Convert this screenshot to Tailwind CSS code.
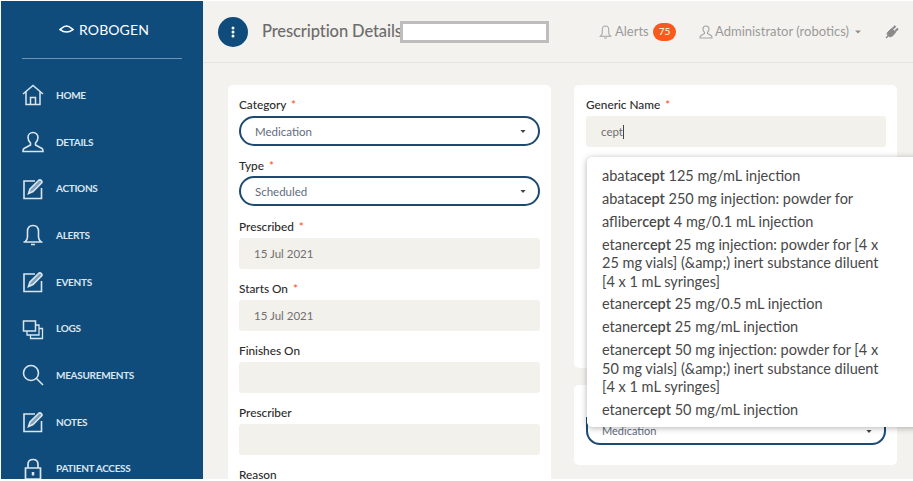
<!DOCTYPE html>
<html>
<head>
<meta charset="utf-8">
<title>Prescription Details</title>
<script src="https://cdn.jsdelivr.net/npm/@tailwindcss/browser@4"></script>
</head>
<body class="bg-white font-['Lato','Open_Sans',sans-serif]">
<div class="flex w-[913px] h-[481px] overflow-hidden pl-px pt-px">
    <div class="relative flex w-full h-[478px] overflow-hidden bg-[#f4f2ee]">

        <!-- Sidebar -->
        <aside class="w-[202px] shrink-0 bg-[#0f4c7c] px-[21px]">
            <div class="flex items-center justify-center gap-[5px] h-[58px] border-b border-[#6f97b5] text-white text-[14px] tracking-[0.1px] pb-[1px] pl-[4px]">
                <svg width="15" height="8" viewBox="0 0 15 8" fill="none" stroke="white" stroke-width="1.6"><path d="M1 4.600C3 3 4.500 1 7.500 1s4.500 2 6.500 3.600C12 6 10 7 7.500 7S3 6 1 4.600Z"/></svg>
                <span>ROBOGEN</span>
            </div>
            <nav class="mt-[13px] text-[#dbe5ee] text-[10px] font-bold tracking-[-0.3px]">
                <!-- Home -->
                <a class="flex items-center h-[46.700px]">
                    <svg class="w-[22px] mr-[12px] shrink-0" width="22" height="22" viewBox="0 0 22 22" fill="none" stroke="#dbe5ee" stroke-width="1.500"><path d="M1 10 11 1.500 21 10M4 8v12.500h14V8M8.500 20.500v-7h5v7"/></svg>
                    <span>HOME</span>
                </a>
                <!-- Details -->
                <a class="flex items-center h-[46.700px]">
                    <svg class="w-[22px] mr-[12px] shrink-0" width="22" height="22" viewBox="0 0 22 22" fill="none" stroke="#dbe5ee" stroke-width="1.600"><path d="M11 1.500c-3 0-5 2.200-5 5 0 2.400 1.200 4.200 2.500 5.500v2L2 17.500c-.8.500-1 1.500-1 3h20c0-1.500-.2-2.500-1-3L13.500 14v-2c1.300-1.300 2.500-3.100 2.500-5.500 0-2.800-2-5-5-5Z"/></svg>
                    <span>DETAILS</span>
                </a>
                <!-- Actions -->
                <a class="flex items-center h-[46.700px]">
                    <svg class="w-[22px] mr-[12px] shrink-0" width="22" height="22" viewBox="0 0 22 22" fill="none" stroke="#dbe5ee" stroke-width="1.600"><path d="M13 3H2v17.500h17.500V10"/><path d="M6.500 15.500 8 11 16.500 2.500c.8-.8 2-.8 2.800 0s.8 2 0 2.800L11 13.500Z" fill="#dbe5ee" fill-opacity=".55"/></svg>
                    <span>ACTIONS</span>
                </a>
                <!-- Alerts -->
                <a class="flex items-center h-[46.700px]">
                    <svg class="w-[22px] mr-[12px] shrink-0" width="22" height="22" viewBox="0 0 22 22" fill="none" stroke="#dbe5ee" stroke-width="1.600"><path d="M11 1.500c-3.500 0-5.500 2.500-5.500 6v5.500c0 2-1 3.500-2.500 5h16c-1.500-1.500-2.500-3-2.500-5V7.500c0-3.500-2-6-5.500-6ZM1.500 18h19M9 20.500h4"/></svg>
                    <span>ALERTS</span>
                </a>
                <!-- Events -->
                <a class="flex items-center h-[46.700px]">
                    <svg class="w-[22px] mr-[12px] shrink-0" width="22" height="22" viewBox="0 0 22 22" fill="none" stroke="#dbe5ee" stroke-width="1.600"><path d="M13 3H2v17.500h17.500V10"/><path d="M6.500 15.500 8 11 16.500 2.500c.8-.8 2-.8 2.800 0s.8 2 0 2.800L11 13.500Z" fill="#dbe5ee" fill-opacity=".55"/></svg>
                    <span>EVENTS</span>
                </a>
                <!-- Logs -->
                <a class="flex items-center h-[46.700px]">
                    <svg class="w-[22px] mr-[12px] shrink-0" width="22" height="22" viewBox="0 0 22 22" fill="none" stroke="#dbe5ee" stroke-width="1.500"><path d="M1.500 3h12v10h-12Z"/><path d="M5 13v4h12V7h-3.500M8.500 17v3.500h12v-10H17" stroke-width="1.300"/></svg>
                    <span>LOGS</span>
                </a>
                <!-- Measurements -->
                <a class="flex items-center h-[46.700px]">
                    <svg class="w-[22px] mr-[12px] shrink-0" width="22" height="22" viewBox="0 0 22 22" fill="none" stroke="#dbe5ee" stroke-width="1.600"><circle cx="9" cy="9" r="7.500"/><path d="m14.500 14.500 6.500 6.500"/></svg>
                    <span>MEASUREMENTS</span>
                </a>
                <!-- Notes -->
                <a class="flex items-center h-[46.700px]">
                    <svg class="w-[22px] mr-[12px] shrink-0" width="22" height="22" viewBox="0 0 22 22" fill="none" stroke="#dbe5ee" stroke-width="1.600"><path d="M13 3H2v17.500h17.500V10"/><path d="M6.500 15.500 8 11 16.500 2.500c.8-.8 2-.8 2.800 0s.8 2 0 2.800L11 13.500Z" fill="#dbe5ee" fill-opacity=".55"/></svg>
                    <span>NOTES</span>
                </a>
                <!-- Patient access -->
                <a class="flex items-center h-[46.700px]">
                    <svg class="w-[22px] mr-[12px] shrink-0" width="22" height="22" viewBox="0 0 22 22" fill="none" stroke="#dbe5ee" stroke-width="1.700"><path d="M6 10V6.500C6 3.500 8 1.500 11 1.500s5 2 5 5V10M3.500 10h15v11h-15Z"/><path d="M11 14v3.500" stroke-width="2.500"/></svg>
                    <span>PATIENT ACCESS</span>
                </a>
            </nav>
        </aside>

        <!-- Main -->
        <main class="flex-1 min-w-0">
            <header class="flex items-center h-[62px] border-b border-[#e6e4df] pl-[15px] text-[#9a9a9a] text-[13px] whitespace-nowrap">
                <button class="flex items-center justify-center shrink-0 w-[30px] h-[30px] rounded-full bg-[#0f4c7c] mr-[14px]">
                    <svg width="4" height="12" viewBox="0 0 4 12" fill="white"><circle cx="2" cy="2" r="1.500"/><circle cx="2" cy="6" r="1.500"/><circle cx="2" cy="10" r="1.500"/></svg>
                </button>
                <h1 class="w-[138px] shrink-0 text-[16.500px] tracking-[-0.1px] text-[#6c6c6c] font-medium">Prescription Details</h1>
                <div class="w-[149px] h-[22px] shrink-0 bg-white border-[3px] border-[#bdbdbd]"></div>
                <div class="flex items-center shrink-0 ml-[50px]">
                    <svg class="mr-[3px]" width="13" height="14" viewBox="0 0 14 15" fill="none" stroke="#a3a3a3" stroke-width="1.100"><path d="M7 1C4.800 1 3.500 2.600 3.500 5v3.500c0 1.500-.8 2.500-2 3.500h11c-1.200-1-2-2-2-3.500V5C10.500 2.600 9.200 1 7 1ZM5.500 14h3"/></svg>
                    <span class="w-[34px]">Alerts</span>
                    <span class="ml-[4px] flex items-center justify-center w-[23px] h-[18px] rounded-full bg-[#f9591a] text-white text-[10px]">75</span>
                </div>
                <div class="flex items-center shrink-0 ml-[23px]">
                    <svg class="mr-[2px]" width="14" height="14" viewBox="0 0 14 14" fill="none" stroke="#a3a3a3" stroke-width="1.100"><path d="M7 1C5.200 1 4 2.300 4 4c0 1.500.7 2.600 1.500 3.400v1.100L1.600 10.800c-.5.300-.6 1-.6 2.200h12c0-1.200-.1-1.900-.6-2.200L8.500 8.500V7.400C9.300 6.600 10 5.500 10 4c0-1.700-1.200-3-3-3Z"/></svg>
                    <span class="w-[135px]">Administrator (robotics)</span>
                    <svg class="ml-[5px]" width="6" height="4" viewBox="0 0 6 4" fill="#8f8f8f"><path d="M0 .5h6L3 3.500Z"/></svg>
                </div>
                <!-- Plug -->
                <svg class="ml-[24px] shrink-0" width="14" height="14" viewBox="0 0 14 14" fill="none" stroke="#8a8a8a"><path d="M2.500 7.500 6.500 3.500 10.500 7.500 7.500 11c-1.500 1-3 1-4 0S1.500 9 2.500 7.500Z" fill="#8a8a8a" stroke-width="1"/><path d="M7.500 4 10.500 1M10 6.500 13 3.500" stroke-width="2"/><path d="M3.500 10.500 1 13" stroke-width="1.500"/></svg>
            </header>

            <div class="grid grid-cols-[323px_323px] gap-x-[23px] pl-[25px] pt-[22px]">
                <!-- Left card -->
                <section class="bg-white rounded-[5px] h-[420px] px-[11px] pt-[11px] text-[11.800px] font-medium text-[#2b2b2b] flex flex-col">
                    <label class="h-[20px] leading-[18px]">Category <span class="text-[#f9591a] ml-[2px]">*</span></label>
                    <div class="flex items-center justify-between h-[30px] mb-[10px] rounded-full border-2 border-[#1c4a72] pl-[14px] pr-[12px] pt-px text-[#5f6b7e] text-[11.500px] font-normal">
                        <span>Medication</span>
                        <svg width="6" height="3" viewBox="0 0 7 4" fill="#444"><path d="M0 0h7L3.500 4Z"/></svg>
                    </div>
                    <label class="h-[20px] leading-[20px]">Type <span class="text-[#f9591a] ml-[2px]">*</span></label>
                    <div class="flex items-center justify-between h-[30px] mb-[11px] rounded-full border-2 border-[#1c4a72] pl-[14px] pr-[12px] pt-px text-[#5f6b7e] text-[11.500px] font-normal">
                        <span>Scheduled</span>
                        <svg width="6" height="3" viewBox="0 0 7 4" fill="#444"><path d="M0 0h7L3.500 4Z"/></svg>
                    </div>
                    <label class="h-[21px] leading-[20px]">Prescribed <span class="text-[#f9591a] ml-[2px]">*</span></label>
                    <div class="flex items-center h-[31px] mb-[10px] rounded-[3px] bg-[#f3f1ec] pl-[15px] text-[#6f6f6f] text-[11.500px] font-normal">15 Jul 2021</div>
                    <label class="h-[21px] leading-[20px]">Starts On <span class="text-[#f9591a] ml-[2px]">*</span></label>
                    <div class="flex items-center h-[31px] mb-[10px] rounded-[3px] bg-[#f3f1ec] pl-[15px] text-[#6f6f6f] text-[11.500px] font-normal">15 Jul 2021</div>
                    <label class="h-[21px] leading-[20px]">Finishes On</label>
                    <div class="h-[31px] mb-[10px] rounded-[3px] bg-[#f3f1ec]"></div>
                    <label class="h-[21px] leading-[20px]">Prescriber</label>
                    <div class="h-[31px] mb-[10px] rounded-[3px] bg-[#f3f1ec]"></div>
                    <label class="h-[21px] leading-[20px]">Reason</label>
                </section>

                <!-- Right column -->
                <div class="flex flex-col gap-[17px]">
                    <section class="bg-white rounded-[5px] h-[283px] pl-[12px] pr-[11px] pt-[11px] text-[11.800px] font-medium text-[#2b2b2b]">
                        <label class="block h-[20px] leading-[18px]">Generic Name <span class="text-[#f9591a] ml-[2px]">*</span></label>
                        <div class="flex items-center h-[31px] rounded-[3px] bg-[#f3f1ec] pl-[15px] text-[#6f6f6f] text-[11.500px] font-normal">cept<span class="w-px h-[14px] bg-[#444]"></span></div>
                    </section>
                    <section class="bg-white rounded-[5px] h-[80px] pl-[12px] pr-[11px] pt-[32px]">
                        <div class="flex items-center justify-between h-[28px] rounded-b-[14px] border-2 border-[#1c4a72] pl-[14px] pr-[12px] text-[#5f6b7e] text-[11px]">
                            <span>Medication</span>
                            <svg width="6" height="3" viewBox="0 0 7 4" fill="#444"><path d="M0 0h7L3.500 4Z"/></svg>
                        </div>
                    </section>
                </div>
            </div>
        </main>

        <!-- Autocomplete dropdown -->
        <ul class="absolute left-[586px] top-[156px] w-[340px] h-[270px] bg-white rounded-[5px] shadow-[0_1px_6px_rgba(0,0,0,0.3)] pl-[15px] pr-[33px] pt-[10px] text-[14.500px] leading-[18.700px] text-[#484848] space-y-[4.300px]">
            <li>abata<b class="font-semibold">cept</b> 125 mg/mL injection</li>
            <li>abata<b class="font-semibold">cept</b> 250 mg injection: powder for</li>
            <li>afliber<b class="font-semibold">cept</b> 4 mg/0.1 mL injection</li>
            <li class="h-[55px] leading-[18.300px]">etaner<b class="font-semibold">cept</b> 25 mg injection: powder for [4 x 25 mg vials] (&amp;amp;) inert substance diluent [4 x 1 mL syringes]</li>
            <li>etaner<b class="font-semibold">cept</b> 25 mg/0.5 mL injection</li>
            <li>etaner<b class="font-semibold">cept</b> 25 mg/mL injection</li>
            <li class="h-[55px] leading-[18.300px]">etaner<b class="font-semibold">cept</b> 50 mg injection: powder for [4 x 50 mg vials] (&amp;amp;) inert substance diluent [4 x 1 mL syringes]</li>
            <li>etaner<b class="font-semibold">cept</b> 50 mg/mL injection</li>
        </ul>
    </div>
</div>
<div class="h-[2px] w-[913px] bg-[#9a9a9a]"></div>
</body>
</html>
